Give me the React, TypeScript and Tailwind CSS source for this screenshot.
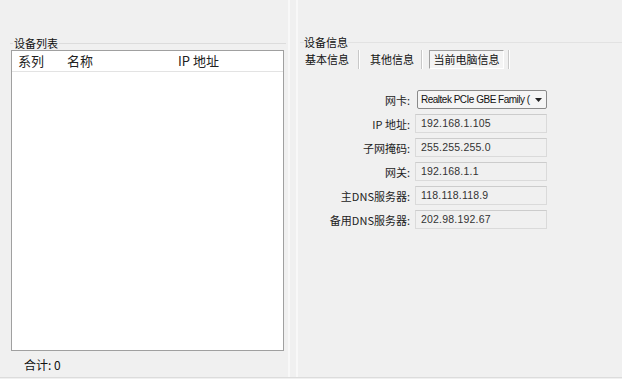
import React from "react";

const font = { fontFamily: '"SimSun","Noto Sans CJK SC","Liberation Sans",sans-serif' };

function Sep() {
  return (
    <div className="flex h-[19px] w-[2px]">
      <div className="w-px bg-[#c8c8c8]" />
      <div className="w-px bg-white" />
    </div>
  );
}

function Field({ value }: { value: string }) {
  return (
    <div
      className="h-[19px] w-[132px] border border-[#dadada] border-t-[#cccccc] bg-[#f0f0f0] pl-[5px] leading-[17px] text-[#333]"
      style={{ fontFamily: '"Liberation Sans",Arial,sans-serif', fontSize: "10.5px", letterSpacing: "0.2px" }}
    >
      {value}
    </div>
  );
}

function Row({ label, children }: { label: string; children: React.ReactNode }) {
  return (
    <div className="flex items-center">
      <div className="w-[115px] pr-[5px] text-right text-[11px] leading-[14px] text-[#222]">{label}</div>
      {children}
    </div>
  );
}

export default function App() {
  return (
    <div className="relative h-[379px] w-[622px] overflow-hidden bg-[#f0f0f0] text-[#111]" style={font}>
      <div className="flex h-[378px] border-b border-[#dcdcdc]">
        {/* left panel */}
        <div className="flex w-[288px] flex-col pt-[36px]">
          <div className="flex h-[14px] items-center pl-[10px]">
            <div className="h-px w-[3px] bg-[#dcdcdc]" />
            <span className="px-[1px] text-[11px] leading-[14px]">设备列表</span>
            <div className="mr-[2px] h-px flex-1 bg-[#dcdcdc]" />
          </div>
          <div className="ml-[11px] flex h-[301px] w-[273px] flex-col border border-[#a0a0a0] bg-white">
            <div className="flex h-[21px] items-center border-b border-[#e3e3e3] text-[13px] text-[#222]">
              <div className="w-[55px] pl-[6px]">系列</div>
              <div className="w-[111px]">名称</div>
              <div>IP 地址</div>
            </div>
          </div>
          <div className="pl-[24px] pt-[7px] text-[12px] leading-[14px]">合计: 0</div>
        </div>
        {/* splitter */}
        <div className="flex w-[12px]">
          <div className="w-[2px] bg-[#f8f8f8]" />
          <div className="w-[6px]" />
          <div className="w-[2px] bg-[#f8f8f8]" />
        </div>
        {/* right panel */}
        <div className="flex flex-1 flex-col pt-[36px]">
          <div className="flex h-[12px] items-center">
            <div className="h-px w-[4px] bg-[#e2e2e2]" />
            <span className="text-[11px] leading-[12px]">设备信息</span>
            <div className="h-px flex-1 bg-[#e2e2e2]" />
          </div>
          <div className="mt-[2px] flex h-[19px] items-center pl-[5px] text-[11px]">
            <span>基本信息</span>
            <div className="ml-[9px] mr-[10px]"><Sep /></div>
            <span>其他信息</span>
            <div className="ml-[7px] mr-[6px]"><Sep /></div>
            <div className="flex h-[19px] w-[75px] items-center justify-center border border-[#a0a0a0] border-b-white border-r-white bg-[#f4f4f4]">当前电脑信息</div>
            <div className="ml-[4px]"><Sep /></div>
          </div>
          <div className="mt-[21px] flex flex-col gap-[5px]">
            <Row label="网卡:">
              <div
                className="ml-[2px] flex h-[19px] w-[130px] items-center gap-[4px] rounded-[2px] border border-[#8a8a8a] bg-[#f5f5f5] pl-[3px] pr-[4px]"
                style={{ fontFamily: '"Liberation Sans",Arial,sans-serif', fontSize: "10px", letterSpacing: "-0.5px" }}
              >
                <span className="min-w-0 flex-1 whitespace-nowrap">Realtek PCIe GBE Family (</span>
                <svg width="7" height="4" viewBox="0 0 7 4" className="shrink-0"><path d="M0 0h7L3.5 4z" fill="#222" /></svg>
              </div>
            </Row>
            <Row label="IP 地址:"><Field value="192.168.1.105" /></Row>
            <Row label="子网掩码:"><Field value="255.255.255.0" /></Row>
            <Row label="网关:"><Field value="192.168.1.1" /></Row>
            <Row label="主DNS服务器:"><Field value="118.118.118.9" /></Row>
            <Row label="备用DNS服务器:"><Field value="202.98.192.67" /></Row>
          </div>
        </div>
      </div>
    </div>
  );
}
